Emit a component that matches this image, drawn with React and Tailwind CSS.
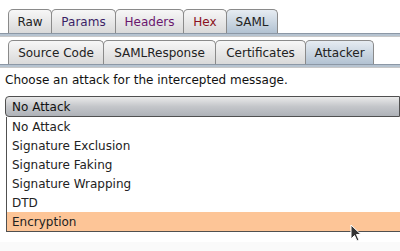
import React from "react";

const top = [
  { t: "Raw", c: "text-[#222]", w: "w-[44px]" },
  { t: "Params", c: "text-[#3b1f66]", w: "w-[65px]" },
  { t: "Headers", c: "text-[#6a176e]", w: "w-[69px]" },
  { t: "Hex", c: "text-[#8a1020]", w: "w-[44px]" },
  { t: "SAML", c: "text-[#222]", w: "w-[52px]", sel: true },
];
const sub = [
  { t: "Source Code", w: "w-[96px]" },
  { t: "SAMLResponse", w: "w-[113px]" },
  { t: "Certificates", w: "w-[91px]" },
  { t: "Attacker", w: "w-[69px]", sel: true },
];
const items = ["No Attack", "Signature Exclusion", "Signature Faking", "Signature Wrapping", "DTD", "Encryption"];

function Tab({ t, c = "text-[#222]", w, sel }) {
  return (
    <div
      className={`${w} h-[24px] -ml-px first:ml-0 flex items-center justify-center border border-b-0 border-[#8a8a8a] rounded-t-[5px] text-[12px] ${c} ${
        sel
          ? "bg-gradient-to-b from-[#e6ecf2] to-[#b2c2d2]"
          : "bg-gradient-to-b from-[#f7f7f7] to-[#d9d9d9]"
      }`}
    >
      {t}
    </div>
  );
}

export default function App() {
  return (
    <div
      className="w-[400px] h-[251px] bg-[#fafafa] overflow-hidden relative"
      style={{ fontFamily: '"DejaVu Sans", sans-serif' }}
    >
      <div className="h-[9px] bg-white" />
      <div className="flex pl-[8px] bg-white">
        {top.map((x) => (
          <Tab key={x.t} {...x} />
        ))}
      </div>
      <div className="h-[3px] bg-[#b6c3d0] border-t border-[#8c98a6]" />
      <div className="h-[4px] bg-white border-t border-[#c8c8c8]" />
      <div className="flex pl-[8px] bg-white">
        {sub.map((x) => (
          <Tab key={x.t} {...x} />
        ))}
      </div>
      <div className="h-[3px] bg-[#b6c3d0] border-t border-[#8c98a6]" />
      <div className="bg-white border-t border-[#c8c8c8] pb-[10px]">
        <div className="pl-[5px] pt-[5px] text-[12px] text-[#111] leading-[15px]">
          Choose an attack for the intercepted message.
        </div>
        <div className="ml-[5px] mt-[8px] h-[21px] border border-[#505050] rounded-l-[4px] bg-gradient-to-b from-[#eaeaea] via-[#c4c6ca] to-[#aeb2b8] flex items-center pl-[6px] text-[12px] text-[#111]">
          No Attack
        </div>
        <div className="ml-[6px] border-l border-b border-[#505050] bg-white">
          {items.map((it, i) => (
            <div
              key={it}
              className={`h-[19px] flex items-center pl-[5px] text-[12px] text-[#222] ${
                i === items.length - 1 ? "bg-[#fdc597]" : ""
              }`}
            >
              {it}
            </div>
          ))}
        </div>
      </div>
      <svg
        className="absolute left-[350px] top-[224px]"
        width="14"
        height="20"
        viewBox="0 0 14 20"
      >
        <path d="M1 1 L1 15 L4.5 11.5 L7 17 L9 16 L6.5 10.5 L11 10.5 Z" fill="#333" stroke="#fff" strokeWidth="1" />
      </svg>
    </div>
  );
}
